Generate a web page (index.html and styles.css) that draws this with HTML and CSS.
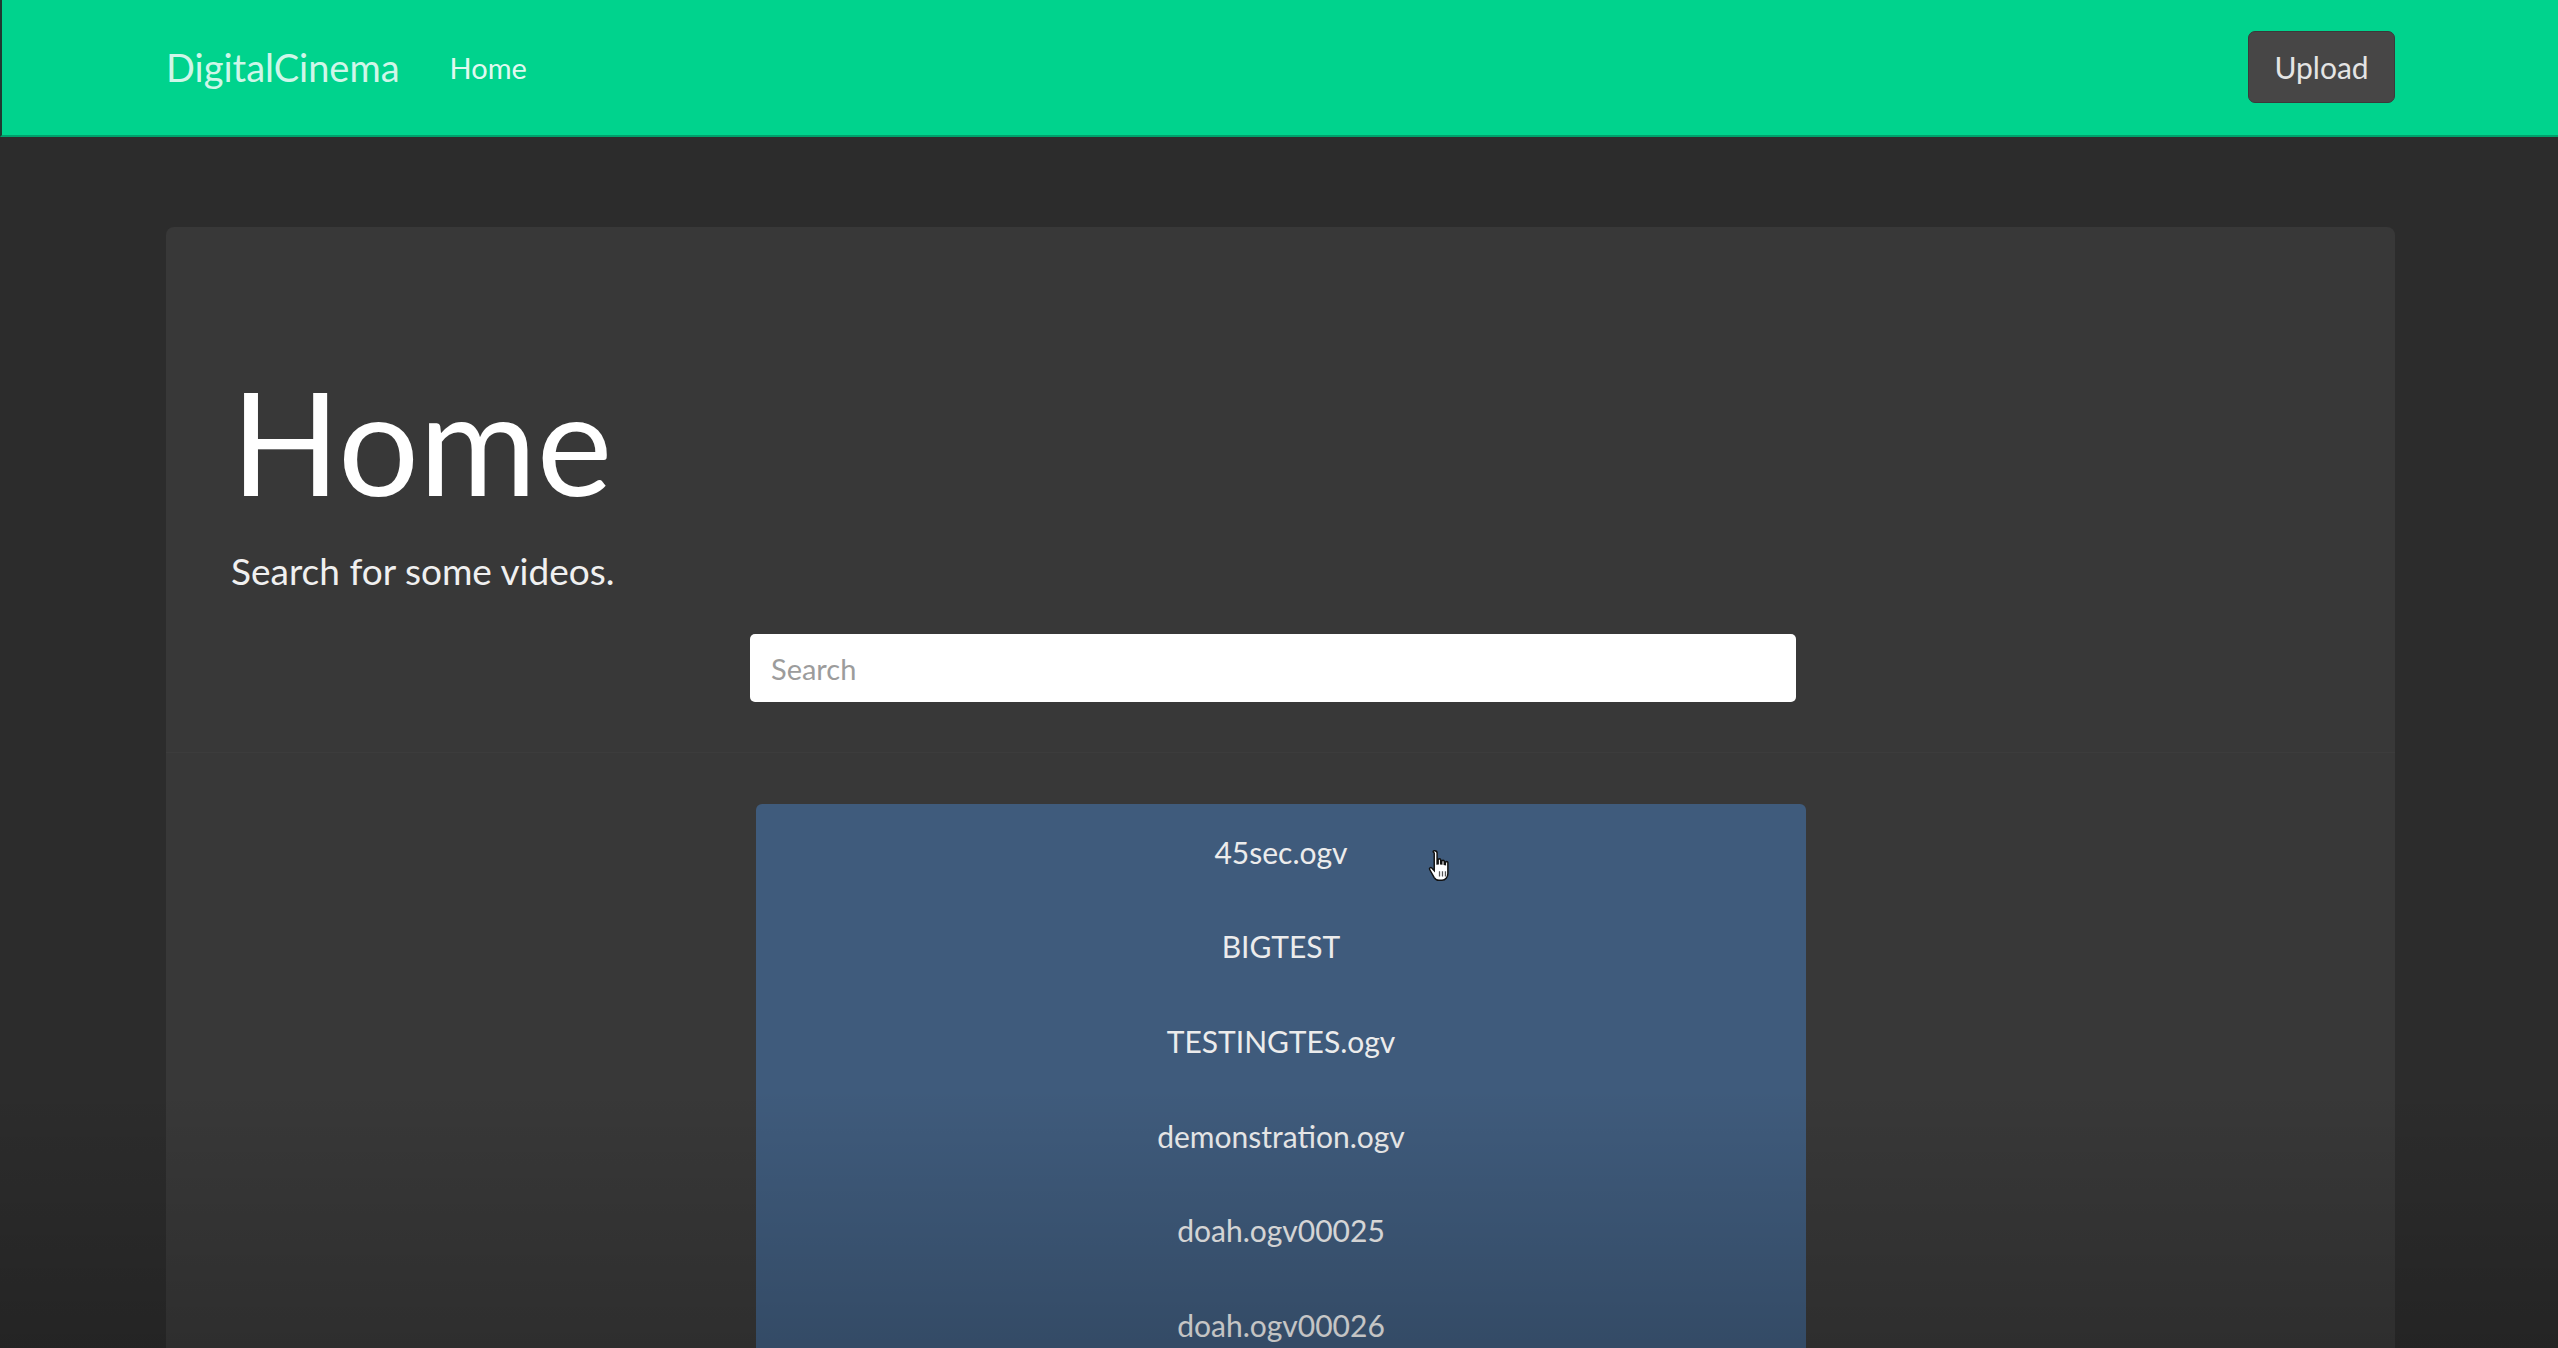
FILE: index.html
```html
<!DOCTYPE html>
<html lang="en">
<head>
<meta charset="utf-8">
<title>DigitalCinema</title>
<link rel="stylesheet" href="styles.css">
</head>
<body>
<div class="page">
  <nav class="navbar">
    <div class="nav-left">
      <a class="brand" href="#">DigitalCinema</a>
      <a class="nav-link" href="#">Home</a>
    </div>
    <button class="btn-upload" type="button">Upload</button>
  </nav>
  <main class="main">
    <section class="jumbotron">
      <h1 class="title">Home</h1>
      <p class="lead">Search for some videos.</p>
      <div class="search-col">
        <input class="search" type="text" placeholder="Search">
      </div>
      <div class="divider"></div>
      <div class="search-col">
        <ul class="results">
          <li class="result">45sec.ogv</li>
          <li class="result">BIGTEST</li>
          <li class="result">TESTINGTES.ogv</li>
          <li class="result">demonstration.ogv</li>
          <li class="result">doah.ogv00025</li>
          <li class="result">doah.ogv00026</li>
          <li class="result">doah.ogv00027</li>
          <svg class="cursor" width="28" height="36" viewBox="0 0 26 34">
            <path d="M7 2.5c1.4 0 2.3 1 2.3 2.3V15l1-.1V11c0-1.2 2.4-1.2 2.4 0v4l1 .1V12.5c0-1.2 2.4-1.2 2.4 0v3l1 .2v-2c0-1.2 2.4-1.2 2.4 0V24c0 3.5-2.4 6.5-5.5 6.5H11c-2 0-3.4-1-4.4-2.6L2.3 20.3c-.7-1.3.9-2.5 2-1.4l.4.4 1.9 2V4.8C4.7 3.5 5.6 2.5 7 2.5z" fill="#ffffff" stroke="#111111" stroke-width="1.4"/>
            <path d="M11.6 22v5M14.4 22v5M17.2 22v5" stroke="#555" stroke-width="1.2"/>
          </svg>
        </ul>
      </div>
    </section>
  </main>
  <div class="vignette"></div>
</div>
</body>
</html>
```

FILE: styles.css
```css
html, body {
  margin: 0;
  padding: 0;
  height: 100%;
  overflow: hidden;
}

body {
  background: #2c2c2c;
  font-family: "Lato", "Open Sans", "Liberation Sans", sans-serif;
  color: #ffffff;
}

.page {
  position: relative;
  height: 100%;
  overflow: hidden;
}

.navbar {
  height: 135px;
  background: #00d38d;
  border-bottom: 2px solid #00a06c;
  border-left: 2px solid #1f3b31;
  display: flex;
  align-items: center;
  justify-content: space-between;
  padding: 0 163px 0 164px;
}

.nav-left {
  display: flex;
  align-items: center;
  gap: 50px;
}

.brand {
  font-size: 38px;
  color: rgba(255, 255, 255, 0.82);
  text-decoration: none;
  line-height: 1;
  padding-bottom: 2px;
}

.nav-link {
  font-size: 29px;
  color: rgba(255, 255, 255, 0.9);
  text-decoration: none;
  line-height: 1;
}

.btn-upload {
  width: 147px;
  height: 72px;
  margin-top: -2px;
  background: #474646;
  border: 1px solid #3a3a3a;
  border-radius: 7px;
  color: #e4e4e4;
  font-family: "Lato", "Open Sans", "Liberation Sans", sans-serif;
  font-size: 30px;
  padding: 0;
}

.main {
  padding: 90px 163px 0 166px;
}

.jumbotron {
  background: #383838;
  border-radius: 8px;
  padding: 135px 60px 0 65px;
  min-height: 1200px;
}

.title {
  margin: 0;
  font-size: 143px;
  font-weight: 400;
  line-height: 1.1;
  color: #ffffff;
}

.lead {
  margin: 26px 0 0 0;
  font-size: 37px;
  line-height: 52px;
  color: #f0f0f0;
}

.search-col {
  width: 1056px;
  margin: 0 auto;
  position: relative;
  left: -5px;
}

.search {
  display: block;
  box-sizing: border-box;
  width: 1046px;
  height: 68px;
  margin-top: 37px;
  border: none;
  border-radius: 5px;
  background: #ffffff;
  padding: 0 21px;
  font-family: "Lato", "Open Sans", "Liberation Sans", sans-serif;
  font-size: 29px;
  color: #333;
  outline: none;
}

.search::placeholder {
  color: #9c9c9c;
}

.divider {
  height: 1px;
  margin: 50px -60px 0 -65px;
  background: rgba(255, 255, 255, 0.025);
}

.results {
  position: relative;
  list-style: none;
  margin: 51px 0 0 6px;
  padding: 0;
  width: 1050px;
  background: #3f5b7c;
  border-radius: 6px 6px 0 0;
}

.result {
  text-align: center;
  font-size: 30px;
  line-height: 36px;
  padding: 29.5px 0 29.1px 0;
  color: #ececec;
}

.cursor {
  position: absolute;
  left: 671px;
  top: 44px;
}

.vignette {
  position: absolute;
  left: 0;
  right: 0;
  bottom: 0;
  height: 260px;
  background: linear-gradient(to bottom, rgba(0, 0, 0, 0) 0%, rgba(0, 0, 0, 0.18) 100%);
  pointer-events: none;
}
```
